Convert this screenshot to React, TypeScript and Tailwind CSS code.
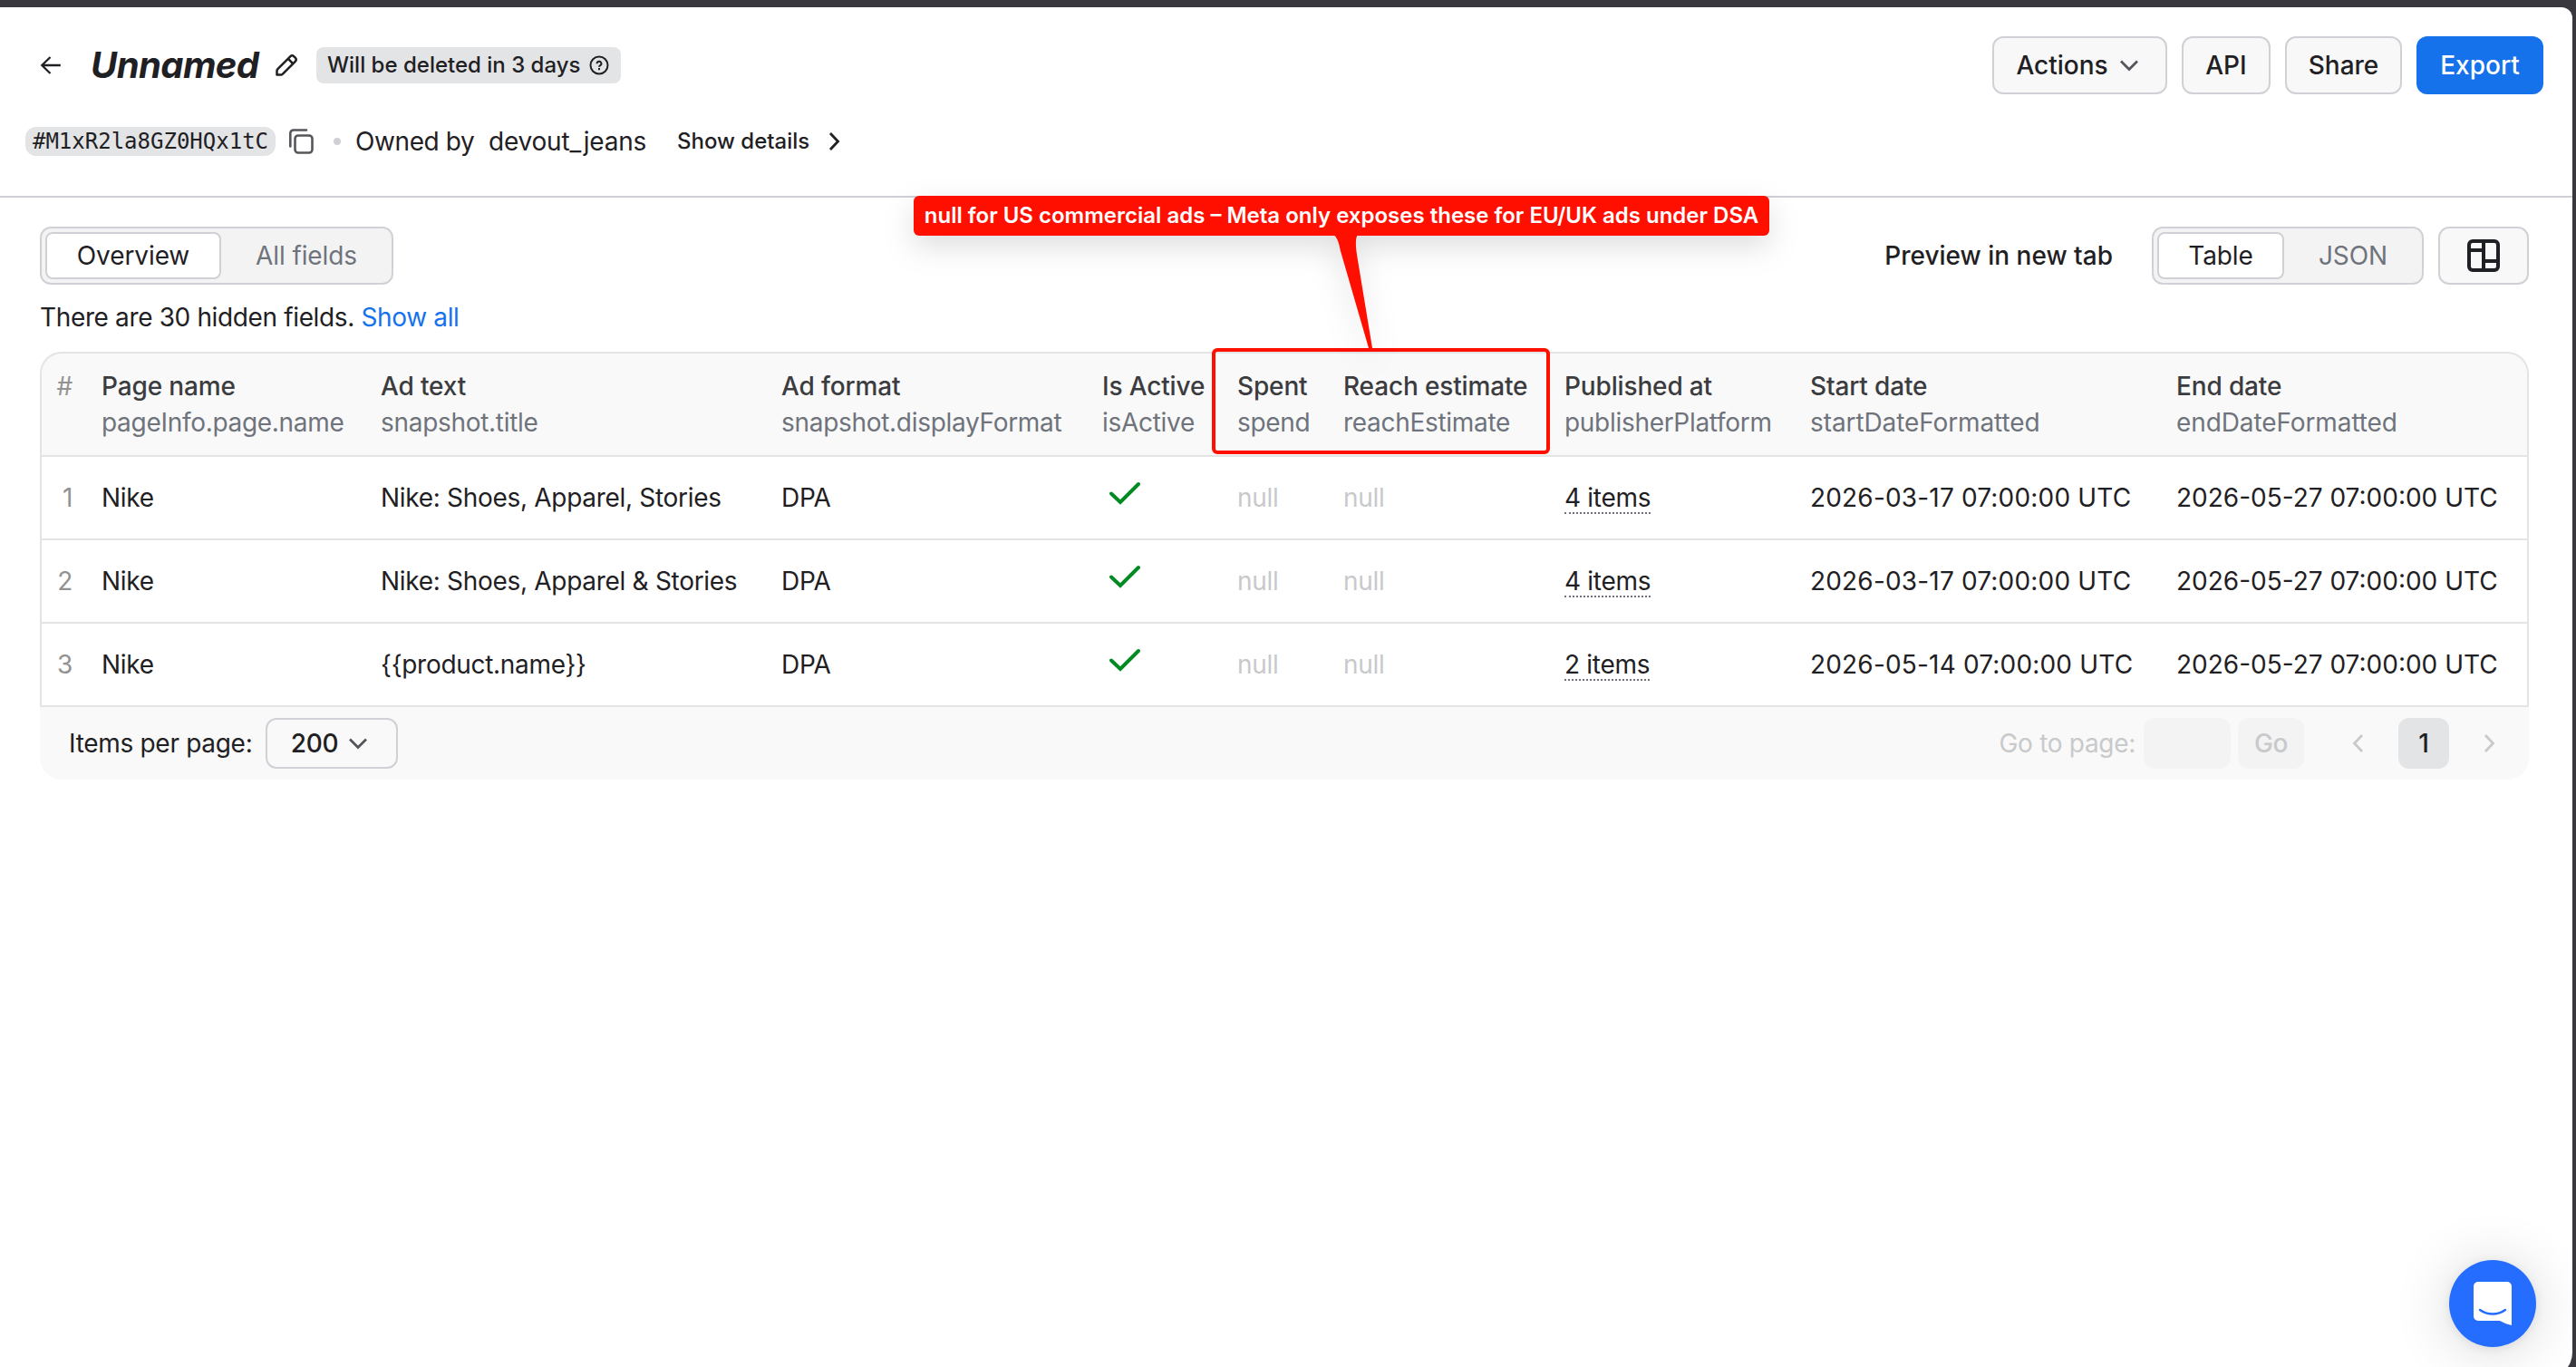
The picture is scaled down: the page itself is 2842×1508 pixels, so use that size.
import type { ReactNode } from "react";

type Column = { title: string; field: string; width: string };

const COLUMNS: Column[] = [
  { title: "Page name", field: "pageInfo.page.name", width: "w-[308px]" },
  { title: "Ad text", field: "snapshot.title", width: "w-[442px]" },
  { title: "Ad format", field: "snapshot.displayFormat", width: "w-[354px]" },
  { title: "Is Active", field: "isActive", width: "w-[149px]" },
  { title: "Spent", field: "spend", width: "w-[117px]" },
  { title: "Reach estimate", field: "reachEstimate", width: "w-[244px]" },
  { title: "Published at", field: "publisherPlatform", width: "w-[271px]" },
  { title: "Start date", field: "startDateFormatted", width: "w-[404px]" },
  { title: "End date", field: "endDateFormatted", width: "w-auto" },
];

const ROWS = [
  { page: "Nike", text: "Nike: Shoes, Apparel, Stories", format: "DPA", items: 4, start: "2026-03-17 07:00:00 UTC", end: "2026-05-27 07:00:00 UTC" },
  { page: "Nike", text: "Nike: Shoes, Apparel & Stories", format: "DPA", items: 4, start: "2026-03-17 07:00:00 UTC", end: "2026-05-27 07:00:00 UTC" },
  { page: "Nike", text: "{{product.name}}", format: "DPA", items: 2, start: "2026-05-14 07:00:00 UTC", end: "2026-05-27 07:00:00 UTC" },
];

function Chevron({ dir, className = "" }: { dir: "down" | "left" | "right"; className?: string }) {
  const d = { down: "M7 11.5l9 9 9-9", left: "M20 7l-8.5 9 8.5 9", right: "M12 7l8.5 9-8.5 9" }[dir];
  return (
    <svg viewBox="0 0 32 32" className={`size-8 shrink-0 ${className}`} fill="none" stroke="currentColor" strokeWidth="2.8">
      <path d={d} />
    </svg>
  );
}

function Button({ children, className = "" }: { children: ReactNode; className?: string }) {
  return (
    <button className={`flex h-16 items-center justify-center rounded-xl border-2 border-[#d0d1d6] bg-[#f8f8f9] font-medium tracking-normal ${className}`}>
      {children}
    </button>
  );
}

function Segmented({ options, widths }: { options: string[]; widths: string[] }) {
  return (
    <div className="flex h-16 rounded-xl border-2 border-[#d0d1d6] bg-[#f3f3f3] p-1">
      {options.map((o, i) => (
        <button
          key={o}
          className={`rounded-lg tracking-[-0.1px] ${widths[i]} ${i === 0 ? "border-2 border-[#d0d1d6] bg-white" : "pl-1 text-[#6f737c]"}`}
        >
          {o}
        </button>
      ))}
    </div>
  );
}

function Header() {
  return (
    <header className="flex h-[210px] justify-between border-b-2 border-[#d0d1d6] pt-8 pr-8">
      <div className="flex flex-col">
        <div className="flex h-16 items-center">
          <svg viewBox="0 0 24 24" className="ml-11 size-6" fill="none" stroke="currentColor" strokeWidth="2.3">
            <path d="M22.800 12H2.500M11.500 3L2.300 12l9.200 9" />
          </svg>
          <h1 className="ml-8 w-[198px] text-[40px] font-bold tracking-[-0.6px] italic">Unnamed</h1>
          <svg viewBox="0 0 26 26" className="ml-[5px] size-[26px]" fill="none" stroke="currentColor" strokeWidth="2.5" strokeLinejoin="round">
            <path d="M2.500 23.500v-4.300a3 3 0 0 1 .9-2.100L17.200 3.300a3 3 0 0 1 4.200 0l1.300 1.300a3 3 0 0 1 0 4.200L8.900 22.600a3 3 0 0 1-2.100.9zM15.200 6.200l4.800 4.800" />
          </svg>
          <div className="ml-5 flex h-10 w-[336px] items-center justify-between rounded-lg bg-[#e3e4e6] pr-[13px] pl-3 text-2xl font-medium tracking-normal whitespace-nowrap">
            Will be deleted in 3 days
            <svg viewBox="0 0 22 22" className="size-[22px]" fill="none" stroke="currentColor" strokeWidth="2">
              <circle cx="11" cy="11" r="9.500" />
              <path d="M8.600 9.200a2.400 2.400 0 1 1 3.600 2c-.8.5-1.200.8-1.200 1.600" />
              <path d="M11 14v2.200" />
            </svg>
          </div>
        </div>
        <div className="mt-8 flex h-10 items-center whitespace-nowrap">
          <span className="ml-7 flex h-8 w-[276px] items-center justify-center rounded-xl bg-[#e3e4e6] font-['DejaVu_Sans_Mono',monospace] text-2xl tracking-normal">
            #M1xR2la8GZ0HQx1tC
          </span>
          <svg viewBox="0 0 28 28" className="ml-[14px] size-7 text-[#55565c]" fill="none" stroke="currentColor" strokeWidth="2.600" strokeLinecap="round">
            <rect x="7.500" y="7.500" width="19" height="19" rx="3.500" />
            <path d="M2.300 19.500V5a3.500 3.500 0 0 1 3.500-3.500H20" />
          </svg>
          <span className="ml-[22px] size-2 rounded-full bg-[#d0d1d6]" />
          <span className="ml-4 w-[147px] tracking-[-0.4px]">Owned by</span>
          <span className="w-[208px] tracking-[-0.2px]">devout_jeans</span>
          <span className="w-[157px] text-2xl font-medium tracking-normal">Show details</span>
          <Chevron dir="right" />
        </div>
      </div>
      <div className="flex gap-4">
        <Button className="w-[193px] gap-[7px]">
          Actions
          <Chevron dir="down" className="text-[#55565c]" />
        </Button>
        <Button className="w-[98px]">API</Button>
        <Button className="w-[129px]">Share</Button>
        <button className="h-16 w-[140px] rounded-xl bg-[#1672eb] font-medium tracking-normal text-white">Export</button>
      </div>
    </header>
  );
}

function Toolbar() {
  return (
    <div className="flex items-center justify-between">
      <Segmented options={["Overview", "All fields"]} widths={["w-[194px]", "w-[184px]"]} />
      <div className="flex items-center">
        <span className="mr-[43px] font-medium tracking-normal">Preview in new tab</span>
        <Segmented options={["Table", "JSON"]} widths={["w-[140px]", "w-[148px]"]} />
        <Button className="ml-4 w-[100px]">
          <svg viewBox="0 0 36 36" className="size-9" fill="none" stroke="currentColor" strokeWidth="4">
            <rect x="2" y="2" width="32" height="32" rx="4" />
            <path d="M18 2v32M2 12h16M18 24h16" />
          </svg>
        </Button>
      </div>
    </div>
  );
}

function DataTable() {
  return (
    <table className="w-full table-fixed border-separate border-spacing-0 text-left leading-10 whitespace-nowrap">
      <thead>
        <tr className="h-[116px]">
          <th className="w-[68px] rounded-tl-3xl border-y-2 border-l-2 border-[#e3e4e6] bg-[#f9f9f9] pr-8 pb-10 text-right align-middle font-normal text-[#929292]">
            #
          </th>
          {COLUMNS.map((c) => (
            <th key={c.field} className={`${c.width} border-y-2 border-[#e3e4e6] bg-[#f9f9f9] font-normal last:rounded-tr-3xl last:border-r-2`}>
              <div className="font-medium tracking-[-0.15px] text-[#3b3c40]">{c.title}</div>
              <div className={`text-[#6f737c] ${c.field.endsWith("Formatted") ? "tracking-[-0.1px]" : ""}`}>{c.field}</div>
            </th>
          ))}
        </tr>
      </thead>
      <tbody className="[&_td]:border-b-2 [&_td]:border-[#e3e4e6]">
        {ROWS.map((r, i) => (
          <tr key={i} className="h-[92px]">
            <td className="border-l-2 pr-8 text-right text-[#929292]">{i + 1}</td>
            <td>{r.page}</td>
            <td>{r.text}</td>
            <td>{r.format}</td>
            <td>
              <svg viewBox="0 0 36 26" className="mb-[11px] ml-[7px] h-[26px] w-9" fill="none" stroke="#008a22" strokeWidth="4" strokeLinecap="round">
                <path d="M3 13.500l10 9.500L33 3" />
              </svg>
            </td>
            <td className="text-[#c8c9cb]">null</td>
            <td className="text-[#c8c9cb]">null</td>
            <td>
              <span className="inline-block border-b-2 border-dotted border-[#6f737c] leading-8">{r.items} items</span>
            </td>
            <td className="tracking-[0.18px]">{r.start}</td>
            <td className="border-r-2 tracking-normal">{r.end}</td>
          </tr>
        ))}
      </tbody>
    </table>
  );
}

function Pagination() {
  return (
    <div className="flex h-20 items-center rounded-b-3xl bg-[#f9f9f9] pr-7 pl-8 whitespace-nowrap">
      <span className="w-[217px]">Items per page:</span>
      <button className="flex h-14 w-[146px] items-center justify-center gap-[6px] rounded-xl border-2 border-[#d0d1d6] font-medium">
        200
        <Chevron dir="down" className="text-[#55565c]" />
      </button>
      <div className="ml-auto flex items-center text-[#c8c9cb]">
        <span className="mr-[9px]">Go to page:</span>
        <div className="h-14 w-24 rounded-xl bg-[#f3f3f3]" />
        <button className="ml-2 h-14 w-[73px] rounded-xl bg-[#f3f3f3] font-medium">Go</button>
        <Chevron dir="left" className="ml-11" />
        <button className="ml-7 size-14 rounded-xl bg-[#e3e4e6] font-medium text-[#1f2023]">1</button>
        <Chevron dir="right" className="ml-7" />
      </div>
    </div>
  );
}

function Callout() {
  return (
    <div className="absolute top-[216px] left-[1008px] drop-shadow-[0_12px_16px_rgba(0,0,0,0.13)]">
      <div className="flex h-11 w-[944px] items-center justify-center rounded-md bg-[#ff0f00] text-2xl font-semibold tracking-normal whitespace-nowrap text-white">
        null for US commercial ads – Meta only exposes these for EU/UK ads under DSA
      </div>
      <svg viewBox="0 0 50 128" className="absolute top-[43px] left-[463px] h-32 w-[50px]" fill="#ff0f00">
        <path d="M0 0C4 2 6 8 8 18L39 125h4L26 22C24 8 25 2 27 0z" />
      </svg>
    </div>
  );
}

export default function App() {
  return (
    <div className="h-[1508px] w-[2842px] overflow-hidden bg-[#3a383f] pt-2 pr-1 font-[Inter,sans-serif] text-[28px] leading-10 tracking-[-0.3px] text-[#1f2023] [font-optical-sizing:none]">
      <div className="h-[1512px] rounded-tr-xl rounded-br-[28px] bg-white">
        <Header />
        <main className="pt-8 pr-12 pl-11">
          <Toolbar />
          <p className="mt-4 mb-[18px] tracking-[-0.36px]">
            There are 30 hidden fields. <a className="text-[#1672eb]">Show all</a>
          </p>
          <DataTable />
          <Pagination />
        </main>
      </div>
      <div className="absolute top-96 left-[1337px] h-[117px] w-[373px] rounded-md border-4 border-[#ff0f00]" />
      <Callout />
      <button className="absolute top-[1390px] left-[2702px] flex size-24 items-center justify-center rounded-full bg-[#246dff] shadow-[0_2px_12px_rgba(0,0,0,0.08),0_4px_64px_rgba(0,0,0,0.16)]">
        <svg viewBox="0 0 42 48" className="h-12 w-[42px]">
          <path d="M5 0h32a5 5 0 0 1 5 5v43c-5-1-9-3-13-5H5a5 5 0 0 1-5-5V5a5 5 0 0 1 5-5z" fill="#fff" />
          <path d="M7 31c8 6 20 6 28 0" fill="none" stroke="#246dff" strokeWidth="2.400" strokeLinecap="round" />
        </svg>
      </button>
    </div>
  );
}
